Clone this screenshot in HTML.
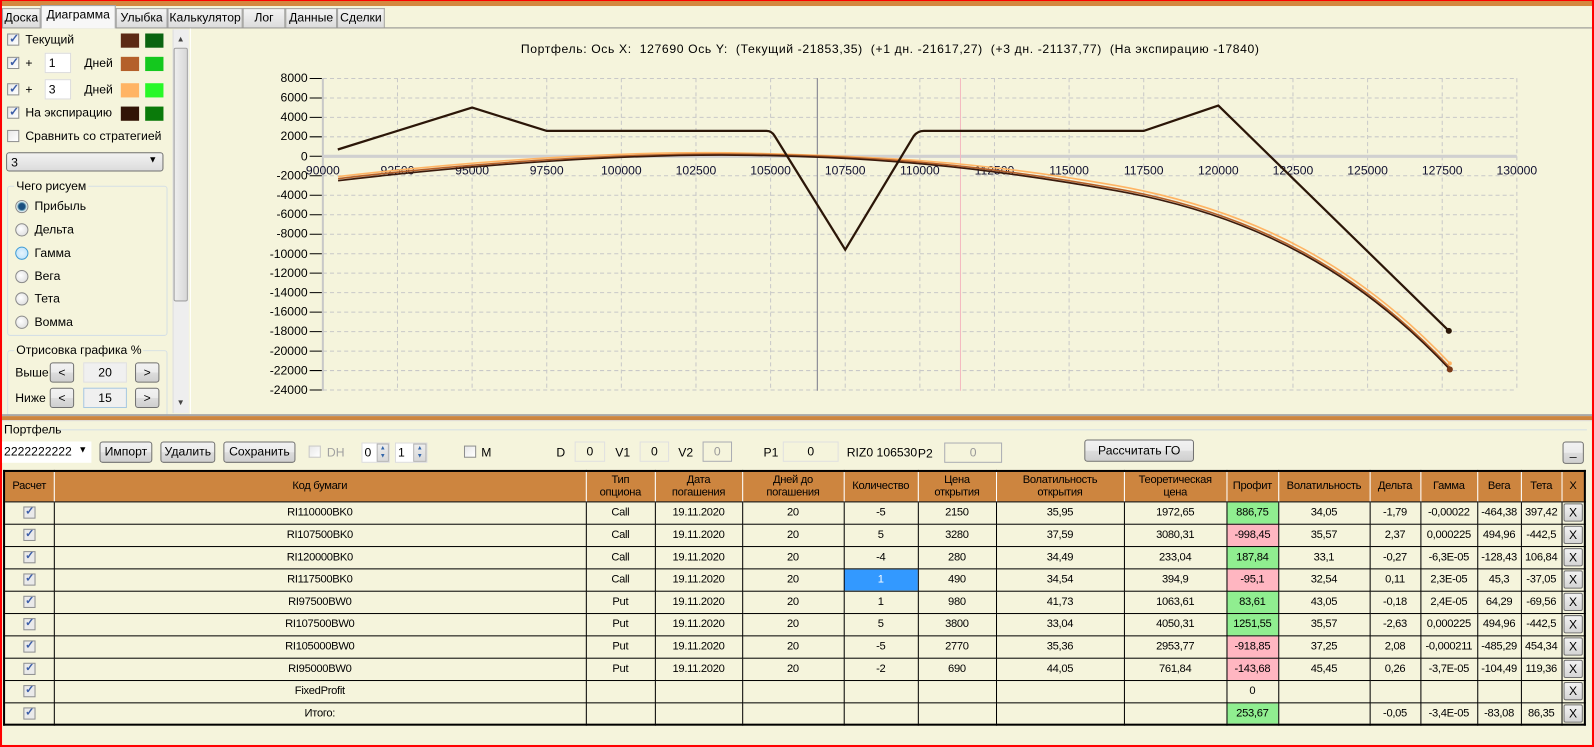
<!DOCTYPE html>
<html><head><meta charset="utf-8">
<style>
*{box-sizing:border-box;margin:0;padding:0}
html,body{width:1594px;height:747px;overflow:hidden;background:#f5f4dc}
body{font-family:"Liberation Sans",Arial,sans-serif;font-size:12px;color:#000}
#root{position:absolute;left:0;top:0;width:1570px;height:736px;transform:scale(1.01529,1.01495);transform-origin:0 0;background:#f5f4dc}
.a{position:absolute}
.tab{position:absolute;top:8px;height:19px;border:1px solid #a0a0a0;border-bottom:none;background:linear-gradient(#f4f4f4,#dcdcdc);font-size:12px;text-align:center;line-height:17px}
.cb{position:absolute;width:12px;height:12px;border:1px solid #8e8f8f;background:linear-gradient(135deg,#e8e8e8,#fff)}
.cb.on::after{content:"✓";position:absolute;left:1px;top:-3px;font-size:12px;color:#3c5ea8;font-weight:bold}
.sw{position:absolute;width:18px;height:14px}
.rd{position:absolute;width:13px;height:13px;border-radius:50%;border:1px solid #8a8a8a;background:radial-gradient(circle at 40% 40%,#fff,#d8d8d8)}
.btn{position:absolute;border:1px solid #707070;border-radius:3px;background:linear-gradient(#f2f2f2,#ebebeb 50%,#dddddd 51%,#cfcfcf);text-align:center;font-size:12px}
.box{position:absolute;border:1px solid #abadb3;background:#f0f0f0;text-align:center;font-size:12px}
.grp{position:absolute;border:1px solid #d5dfe5;border-radius:3px}
.grp span{position:absolute;top:-8px;left:6px;background:#f5f4dc;padding:0 2px}
table{position:absolute;left:3px;top:463px;border-collapse:collapse;table-layout:fixed;font-size:11px;letter-spacing:-0.3px}
td{border:1px solid #000;height:22px;text-align:center;white-space:nowrap;overflow:hidden;padding:0}
th{background:#cd853f;font-weight:normal;height:30px;border-right:1px solid #fff;border-bottom:1px solid #000;line-height:12px;font-size:11px}
td.g{background:#90ee90}td.r{background:#ffb6c1}td.b{background:#3399ff;color:#fff}
.tcb{display:inline-block;width:12px;height:12px;border:1px solid #8e8f8f;background:#eaeaea;position:relative;vertical-align:middle}
.tcb::after{content:"✓";position:absolute;left:1px;top:-3px;font-size:11px;color:#3c5ea8;font-weight:bold}
.xb{display:inline-block;width:19px;height:18px;border:1px solid #707070;border-radius:2px;background:linear-gradient(#f2f2f2,#d5d5d5);line-height:16px;font-size:12px;vertical-align:middle}
</style></head><body><div id="root">
<div class="a" style="left:0;top:0;width:1570px;height:6px;background:#d4883f;border-top:1px solid #f00"></div>
<div class="a" style="left:0;top:0;width:2px;height:736px;background:#f00"></div>
<div class="a" style="right:0;top:0;width:2px;height:736px;background:#f00"></div>
<div class="a" style="left:0;bottom:0;width:1570px;height:2px;background:#f00"></div>
<div class="a" style="left:2px;top:6px;width:1566px;height:22px;background:#f5f4dc;border-bottom:1px solid #8c8c8c"></div>
<div class="tab" style="left:2px;width:38px">Доска</div>
<div class="tab" style="left:40px;top:5px;height:23px;width:74px;background:#f7f7f7;border-bottom:none">Диаграмма</div>
<div class="tab" style="left:114px;width:51px">Улыбка</div>
<div class="tab" style="left:165px;width:74px">Калькулятор</div>
<div class="tab" style="left:239px;width:42px">Лог</div>
<div class="tab" style="left:281px;width:51px">Данные</div>
<div class="tab" style="left:332px;width:47px">Сделки</div>
<div class="cb on" style="left:7px;top:33px"></div><div class="a" style="left:25px;top:32px">Текущий</div>
<div class="sw" style="left:119px;top:33px;background:#5c2a14"></div><div class="sw" style="left:143px;top:33px;background:#0a6410"></div>
<div class="cb on" style="left:7px;top:56px"></div><div class="a" style="left:25px;top:55px">+</div>
<div class="a" style="left:44px;top:52px;width:26px;height:20px;background:#fff;border:1px solid #dcdcdc;padding:2px 3px">1</div>
<div class="a" style="left:83px;top:55px">Дней</div>
<div class="sw" style="left:119px;top:56px;background:#b4602a"></div><div class="sw" style="left:143px;top:56px;background:#14c81e"></div>
<div class="cb on" style="left:7px;top:82px"></div><div class="a" style="left:25px;top:81px">+</div>
<div class="a" style="left:44px;top:78px;width:26px;height:20px;background:#fff;border:1px solid #dcdcdc;padding:2px 3px">3</div>
<div class="a" style="left:83px;top:81px">Дней</div>
<div class="sw" style="left:119px;top:82px;background:#ffb464"></div><div class="sw" style="left:143px;top:82px;background:#28f828"></div>
<div class="cb on" style="left:7px;top:105px"></div><div class="a" style="left:25px;top:104px">На экспирацию</div>
<div class="sw" style="left:119px;top:105px;background:#321406"></div><div class="sw" style="left:143px;top:105px;background:#0a7a0a"></div>
<div class="cb" style="left:7px;top:128px"></div><div class="a" style="left:25px;top:127px">Сравнить со стратегией</div>
<div class="a" style="left:6px;top:150px;width:155px;height:19px;border:1px solid #707070;border-radius:3px;background:linear-gradient(#f2f2f2,#dcdcdc);padding:2px 4px">3<span style="position:absolute;right:5px;top:1px;font-size:9px">▼</span></div>
<div class="grp" style="left:7px;top:183px;width:158px;height:148px"><span>Чего рисуем</span></div>
<div class="rd" style="left:15px;top:197px;background:radial-gradient(circle,#1a4f80 0 3px,#7ab 4px,#e8f2f8 5px)"></div><div class="a" style="left:34px;top:196px">Прибыль</div>
<div class="rd" style="left:15px;top:220px"></div><div class="a" style="left:34px;top:219px">Дельта</div>
<div class="rd" style="left:15px;top:243px;border-color:#3c9ad6;background:radial-gradient(circle,#e6f4fd,#b8e0fa)"></div><div class="a" style="left:34px;top:242px">Гамма</div>
<div class="rd" style="left:15px;top:266px"></div><div class="a" style="left:34px;top:265px">Вега</div>
<div class="rd" style="left:15px;top:288px"></div><div class="a" style="left:34px;top:287px">Тета</div>
<div class="rd" style="left:15px;top:311px"></div><div class="a" style="left:34px;top:310px">Вомма</div>
<div class="grp" style="left:7px;top:345px;width:158px;height:70px;border-bottom:none"><span>Отрисовка графика %</span></div>
<div class="a" style="left:15px;top:360px">Выше</div>
<div class="btn" style="left:49px;top:357px;width:24px;height:20px;line-height:18px">&lt;</div>
<div class="box" style="left:82px;top:357px;width:43px;height:20px;line-height:18px;border-color:#e0e0e0">20</div>
<div class="btn" style="left:133px;top:357px;width:24px;height:20px;line-height:18px">&gt;</div>
<div class="a" style="left:15px;top:385px">Ниже</div>
<div class="btn" style="left:49px;top:382px;width:24px;height:20px;line-height:18px">&lt;</div>
<div class="box" style="left:82px;top:382px;width:43px;height:20px;line-height:18px;border-color:#a8c8e0">15</div>
<div class="btn" style="left:133px;top:382px;width:24px;height:20px;line-height:18px">&gt;</div>
<div class="a" style="left:170px;top:29px;width:16px;height:378px;background:#eeeeee;border-left:1px solid #ddd"></div>
<div class="a" style="left:174px;top:34px;font-size:8px;color:#444">▲</div>
<div class="a" style="left:171px;top:47px;width:14px;height:250px;border:1px solid #a0a0a0;border-radius:2px;background:linear-gradient(90deg,#eee,#d8d8d8)"></div>
<div class="a" style="left:174px;top:392px;font-size:8px;color:#444">▼</div>
<div class="a" style="left:187px;top:28px;width:1px;height:380px;background:#fff"></div>
<svg class="a" style="left:0;top:0" width="1570" height="410" font-family="Liberation Sans, Arial, sans-serif" font-size="12">
<text x="513" y="52" font-size="12" textLength="727" lengthAdjust="spacing" xml:space="preserve">Портфель: Ось X:  127690 Ось Y:  (Текущий -21853,35)  (+1 дн. -21617,27)  (+3 дн. -21137,77)  (На экспирацию -17840)</text>
<g stroke="#c8c8c8" stroke-dasharray="4,3" stroke-width="1">
<path d="M318 77.3H1494M318 96.6H1494M318 115.6H1494M318 134.8H1494M318 173.2H1494M318 192.4H1494M318 211.6H1494M318 230.8H1494M318 250H1494M318 269.1H1494M318 288.3H1494M318 307.5H1494M318 326.7H1494M318 345.9H1494M318 365.1H1494M318 384.3H1494"/>
<path d="M391.5 77V385M465 77V385M538.5 77V385M612 77V385M685.5 77V385M759 77V385M832.5 77V385M906 77V385M979.5 77V385M1053 77V385M1126.5 77V385M1200 77V385M1273.5 77V385M1347 77V385M1420.5 77V385M1494 77V385"/>
</g>
<path d="M318 77V385" stroke="#c8c8c8" stroke-width="2"/>
<path d="M318 154H1494" stroke="#d0d0d0" stroke-width="3"/>
<path d="M805 77V385" stroke="#7a7a8a" stroke-width="1"/>
<path d="M946 77V385" stroke="#f4b8c0" stroke-width="1"/>
<g fill="#000" text-anchor="end">
<text x="303" y="81">8000</text><text x="303" y="100">6000</text><text x="303" y="119">4000</text><text x="303" y="138">2000</text><text x="303" y="158">0</text><text x="303" y="177">-2000</text><text x="303" y="196">-4000</text><text x="303" y="215">-6000</text><text x="303" y="234">-8000</text><text x="303" y="254">-10000</text><text x="303" y="273">-12000</text><text x="303" y="292">-14000</text><text x="303" y="311">-16000</text><text x="303" y="330">-18000</text><text x="303" y="350">-20000</text><text x="303" y="369">-22000</text><text x="303" y="388">-24000</text>
</g>
<g stroke="#000"><path d="M305 77.3h12M305 96.6h12M305 115.6h12M305 134.8h12M305 154h12M305 173.2h12M305 192.4h12M305 211.6h12M305 230.8h12M305 250h12M305 269.1h12M305 288.3h12M305 307.5h12M305 326.7h12M305 345.9h12M305 365.1h12M305 384.3h12"/></g>
<g fill="#101030" text-anchor="middle">
<text x="318" y="172">90000</text><text x="391.5" y="172">92500</text><text x="465" y="172">95000</text><text x="538.5" y="172">97500</text><text x="612" y="172">100000</text><text x="685.5" y="172">102500</text><text x="759" y="172">105000</text><text x="832.5" y="172">107500</text><text x="906" y="172">110000</text><text x="979.5" y="172">112500</text><text x="1053" y="172">115000</text><text x="1126.5" y="172">117500</text><text x="1200" y="172">120000</text><text x="1273.5" y="172">122500</text><text x="1347" y="172">125000</text><text x="1420.5" y="172">127500</text><text x="1494" y="172">130000</text>
</g>
<g fill="none" stroke-width="1.6">
<path d="M333 174 C 470 158 620 148 740 151 S 960 158 1100 183 S 1340 265 1428 358" stroke="#ffb464"/>
<path d="M333 176 C 470 160 620 150 740 152 S 960 161 1100 186 S 1340 269 1428 362" stroke="#b4602a"/>
<path d="M333 178 C 470 162 620 151 740 153 S 960 163 1100 188 S 1340 271 1428 364" stroke="#3a1a0c"/>
</g>
<path d="M332.7 147.3L465 106L538.5 129L755 129Q760 129 763 134L832.5 246L900 134Q904 129 910 129L1126.5 129L1200 104L1426 325" fill="none" stroke="#2b1608" stroke-width="2.2"/>
<circle cx="1427" cy="326" r="3" fill="#2b1608"/><circle cx="1428" cy="364" r="3" fill="#7a3a18"/><circle cx="1428" cy="358" r="2" fill="#ffb464"/>
</svg>
<div class="a" style="left:2px;top:408px;width:1566px;height:2px;background:#a8a8a8"></div>
<div class="a" style="left:2px;top:410px;width:1566px;height:4px;background:#cd853f"></div>
<div class="a" style="left:2px;top:414px;width:1566px;height:1px;background:#e0e0e0"></div>
<div class="a" style="left:4px;top:416px">Портфель</div>
<div class="a" style="left:58px;top:423px;width:1505px;height:1px;background:#d5dfe5"></div>
<div class="a" style="left:2px;top:435px;width:88px;height:21px;background:#fff;padding:3px 2px">2222222222<span style="position:absolute;right:4px;top:3px;font-size:9px">▼</span></div>
<div class="btn" style="left:98px;top:435px;width:52px;height:21px;line-height:19px">Импорт</div>
<div class="btn" style="left:158px;top:435px;width:54px;height:21px;line-height:19px">Удалить</div>
<div class="btn" style="left:220px;top:435px;width:71px;height:21px;line-height:19px">Сохранить</div>
<div class="cb" style="left:304px;top:439px;border-color:#c8c8c8"></div><div class="a" style="left:322px;top:439px;color:#a0a0a0">DH</div>
<div class="a" style="left:356px;top:436px;width:28px;height:20px;background:#fff;border:1px solid #dcdcdc;padding:2px">0</div>
<div class="a" style="left:371px;top:437px;width:12px;height:18px;background:linear-gradient(#eee,#d8d8d8);border:1px solid #b0b0b0;font-size:6px;text-align:center;line-height:8px;color:#36a">▲<br>▼</div>
<div class="a" style="left:389px;top:436px;width:32px;height:20px;background:#fff;border:1px solid #dcdcdc;padding:2px">1</div>
<div class="a" style="left:407px;top:437px;width:13px;height:18px;background:linear-gradient(#eee,#d8d8d8);border:1px solid #b0b0b0;font-size:6px;text-align:center;line-height:8px;color:#36a">▲<br>▼</div>
<div class="cb" style="left:457px;top:439px"></div><div class="a" style="left:474px;top:439px">M</div>
<div class="a" style="left:548px;top:439px">D</div><div class="box" style="left:566px;top:435px;width:30px;height:20px;line-height:18px;border-color:#e0e0e0;background:#f5f4dc">0</div>
<div class="a" style="left:606px;top:439px">V1</div><div class="box" style="left:630px;top:435px;width:29px;height:20px;line-height:18px;border-color:#e0e0e0;background:#f5f4dc">0</div>
<div class="a" style="left:668px;top:439px">V2</div><div class="box" style="left:692px;top:435px;width:29px;height:20px;line-height:18px;color:#999;background:#f5f4dc">0</div>
<div class="a" style="left:752px;top:439px">P1</div><div class="box" style="left:771px;top:435px;width:55px;height:20px;line-height:18px;border-color:#e0e0e0;background:#f5f4dc">0</div>
<div class="a" style="left:834px;top:439px">RIZ0 106530</div>
<div class="a" style="left:904px;top:440px">P2</div><div class="box" style="left:930px;top:436px;width:57px;height:20px;line-height:18px;color:#999;background:#f5f4dc">0</div>
<div class="btn" style="left:1068px;top:433px;width:108px;height:22px;line-height:20px">Рассчитать ГО</div>
<div class="btn" style="left:1539px;top:435px;width:21px;height:22px;line-height:18px">_</div>
<table style="border:2px solid #000">
<colgroup><col style="width:49px"><col style="width:524px"><col style="width:68px"><col style="width:86px"><col style="width:100px"><col style="width:73px"><col style="width:77px"><col style="width:126px"><col style="width:101px"><col style="width:51px"><col style="width:90px"><col style="width:50px"><col style="width:56px"><col style="width:43px"><col style="width:40px"><col style="width:23px"></colgroup>
<tr><th>Расчет</th><th>Код бумаги</th><th>Тип<br>опциона</th><th>Дата<br>погашения</th><th>Дней до<br>погашения</th><th>Количество</th><th>Цена<br>открытия</th><th>Волатильность<br>открытия</th><th>Теоретическая<br>цена</th><th>Профит</th><th>Волатильность</th><th>Дельта</th><th>Гамма</th><th>Вега</th><th>Тета</th><th style="border-right:none">X</th></tr>
<tr><td><span class="tcb"></span></td><td>RI110000BK0</td><td>Call</td><td>19.11.2020</td><td>20</td><td>-5</td><td>2150</td><td>35,95</td><td>1972,65</td><td class="g">886,75</td><td>34,05</td><td>-1,79</td><td>-0,00022</td><td>-464,38</td><td>397,42</td><td><span class="xb">X</span></td></tr>
<tr><td><span class="tcb"></span></td><td>RI107500BK0</td><td>Call</td><td>19.11.2020</td><td>20</td><td>5</td><td>3280</td><td>37,59</td><td>3080,31</td><td class="r">-998,45</td><td>35,57</td><td>2,37</td><td>0,000225</td><td>494,96</td><td>-442,5</td><td><span class="xb">X</span></td></tr>
<tr><td><span class="tcb"></span></td><td>RI120000BK0</td><td>Call</td><td>19.11.2020</td><td>20</td><td>-4</td><td>280</td><td>34,49</td><td>233,04</td><td class="g">187,84</td><td>33,1</td><td>-0,27</td><td>-6,3E-05</td><td>-128,43</td><td>106,84</td><td><span class="xb">X</span></td></tr>
<tr><td><span class="tcb"></span></td><td>RI117500BK0</td><td>Call</td><td>19.11.2020</td><td>20</td><td class="b">1</td><td>490</td><td>34,54</td><td>394,9</td><td class="r">-95,1</td><td>32,54</td><td>0,11</td><td>2,3E-05</td><td>45,3</td><td>-37,05</td><td><span class="xb">X</span></td></tr>
<tr><td><span class="tcb"></span></td><td>RI97500BW0</td><td>Put</td><td>19.11.2020</td><td>20</td><td>1</td><td>980</td><td>41,73</td><td>1063,61</td><td class="g">83,61</td><td>43,05</td><td>-0,18</td><td>2,4E-05</td><td>64,29</td><td>-69,56</td><td><span class="xb">X</span></td></tr>
<tr><td><span class="tcb"></span></td><td>RI107500BW0</td><td>Put</td><td>19.11.2020</td><td>20</td><td>5</td><td>3800</td><td>33,04</td><td>4050,31</td><td class="g">1251,55</td><td>35,57</td><td>-2,63</td><td>0,000225</td><td>494,96</td><td>-442,5</td><td><span class="xb">X</span></td></tr>
<tr><td><span class="tcb"></span></td><td>RI105000BW0</td><td>Put</td><td>19.11.2020</td><td>20</td><td>-5</td><td>2770</td><td>35,36</td><td>2953,77</td><td class="r">-918,85</td><td>37,25</td><td>2,08</td><td>-0,000211</td><td>-485,29</td><td>454,34</td><td><span class="xb">X</span></td></tr>
<tr><td><span class="tcb"></span></td><td>RI95000BW0</td><td>Put</td><td>19.11.2020</td><td>20</td><td>-2</td><td>690</td><td>44,05</td><td>761,84</td><td class="r">-143,68</td><td>45,45</td><td>0,26</td><td>-3,7E-05</td><td>-104,49</td><td>119,36</td><td><span class="xb">X</span></td></tr>
<tr><td><span class="tcb"></span></td><td>FixedProfit</td><td></td><td></td><td></td><td></td><td></td><td></td><td></td><td>0</td><td></td><td></td><td></td><td></td><td></td><td><span class="xb">X</span></td></tr>
<tr><td><span class="tcb"></span></td><td>Итого:</td><td></td><td></td><td></td><td></td><td></td><td></td><td></td><td class="g">253,67</td><td></td><td>-0,05</td><td>-3,4E-05</td><td>-83,08</td><td>86,35</td><td><span class="xb">X</span></td></tr>
</table>
</div></body></html>
